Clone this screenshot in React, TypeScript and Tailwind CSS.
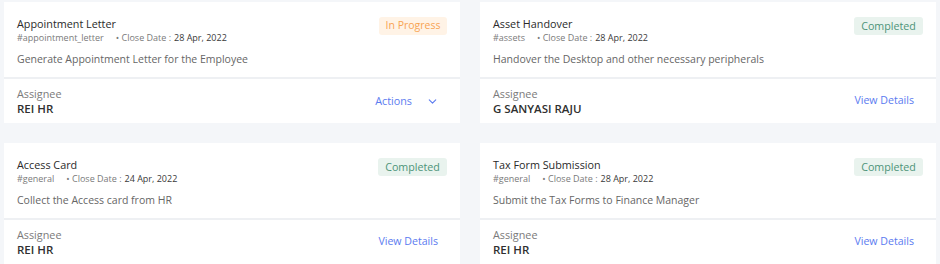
import { ChevronDown } from 'lucide-react'

type Task = {
  title: string
  tag: string
  closeDate: string
  description: string
  assignee: string
  status: 'In Progress' | 'Completed'
  action: 'actions' | 'view'
}

const TASKS: Task[] = [
  {
    title: 'Appointment Letter',
    tag: '#appointment_letter',
    closeDate: '28 Apr, 2022',
    description: 'Generate Appointment Letter for the Employee',
    assignee: 'REI HR',
    status: 'In Progress',
    action: 'actions',
  },
  {
    title: 'Asset Handover',
    tag: '#assets',
    closeDate: '28 Apr, 2022',
    description: 'Handover the Desktop and other necessary peripherals',
    assignee: 'G SANYASI RAJU',
    status: 'Completed',
    action: 'view',
  },
  {
    title: 'Access Card',
    tag: '#general',
    closeDate: '24 Apr, 2022',
    description: 'Collect the Access card from HR',
    assignee: 'REI HR',
    status: 'Completed',
    action: 'view',
  },
  {
    title: 'Tax Form Submission',
    tag: '#general',
    closeDate: '28 Apr, 2022',
    description: 'Submit the Tax Forms to Finance Manager',
    assignee: 'REI HR',
    status: 'Completed',
    action: 'view',
  },
]

function StatusBadge({ status }: { status: Task['status'] }) {
  if (status === 'In Progress') {
    return (
      <span className="flex h-[18px] w-[68px] items-center justify-center rounded-[3px] bg-[#fff3e6] text-[10.5px] text-[#f8a453]">
        In Progress
      </span>
    )
  }
  return (
    <span className="flex h-[18px] w-[69px] items-center justify-center rounded-[3px] bg-[#e9f3ee] text-[10.7px] text-[#4d9479]">
      Completed
    </span>
  )
}

function TaskCard({ task }: { task: Task }) {
  return (
    <div className="flex h-[121px] flex-col bg-[#eef0f3]">
      <div className="flex h-[75px] justify-between bg-white pl-[13px] pr-[13px] pt-[14px]">
        <div className="flex flex-col">
          <div className="text-[10.8px] font-medium leading-[16px] text-[#2a2a2a]">{task.title}</div>
          <div className="flex items-center text-[9px] leading-[12px] text-[#7a7a7a]">
            <span>{task.tag}</span>
            <span className="ml-[12px]">• Close Date :</span>
            <span className="ml-[3px] text-[#3a3a3a]">{task.closeDate}</span>
          </div>
          <div className="mt-[8px] text-[10.5px] leading-[14px] text-[#666]">{task.description}</div>
        </div>
        <div className="pt-[1px]">
          <StatusBadge status={task.status} />
        </div>
      </div>
      <div className="mt-[2px] flex flex-1 items-center justify-between bg-white pl-[13px] pr-[22px]">
        <div className="flex flex-col">
          <span className="text-[10.8px] leading-[15px] text-[#7a7a7a]">Assignee</span>
          <span className="text-[11.5px] font-semibold leading-[16px] text-[#2f2f2f]">{task.assignee}</span>
        </div>
        {task.action === 'actions' ? (
          <div className="flex items-center text-[10.8px] text-[#5b7bf0]">
            <span>Actions</span>
            <ChevronDown className="ml-[14px] mr-[-1px] h-[13px] w-[13px]" strokeWidth={2} />
          </div>
        ) : (
          <span className="text-[10.6px] text-[#5b7bf0]">View Details</span>
        )}
      </div>
    </div>
  )
}

export default function App() {
  return (
    <div
      className="h-[264px] w-[940px] overflow-hidden bg-[#f4f6f9] px-[4px] pt-[2px]"
      style={{ fontFamily: '"Open Sans", "Noto Sans", sans-serif' }}
    >
      <div className="grid grid-cols-2 gap-x-[20px] gap-y-[20px]">
        {TASKS.map((task) => (
          <TaskCard key={task.title} task={task} />
        ))}
      </div>
    </div>
  )
}
